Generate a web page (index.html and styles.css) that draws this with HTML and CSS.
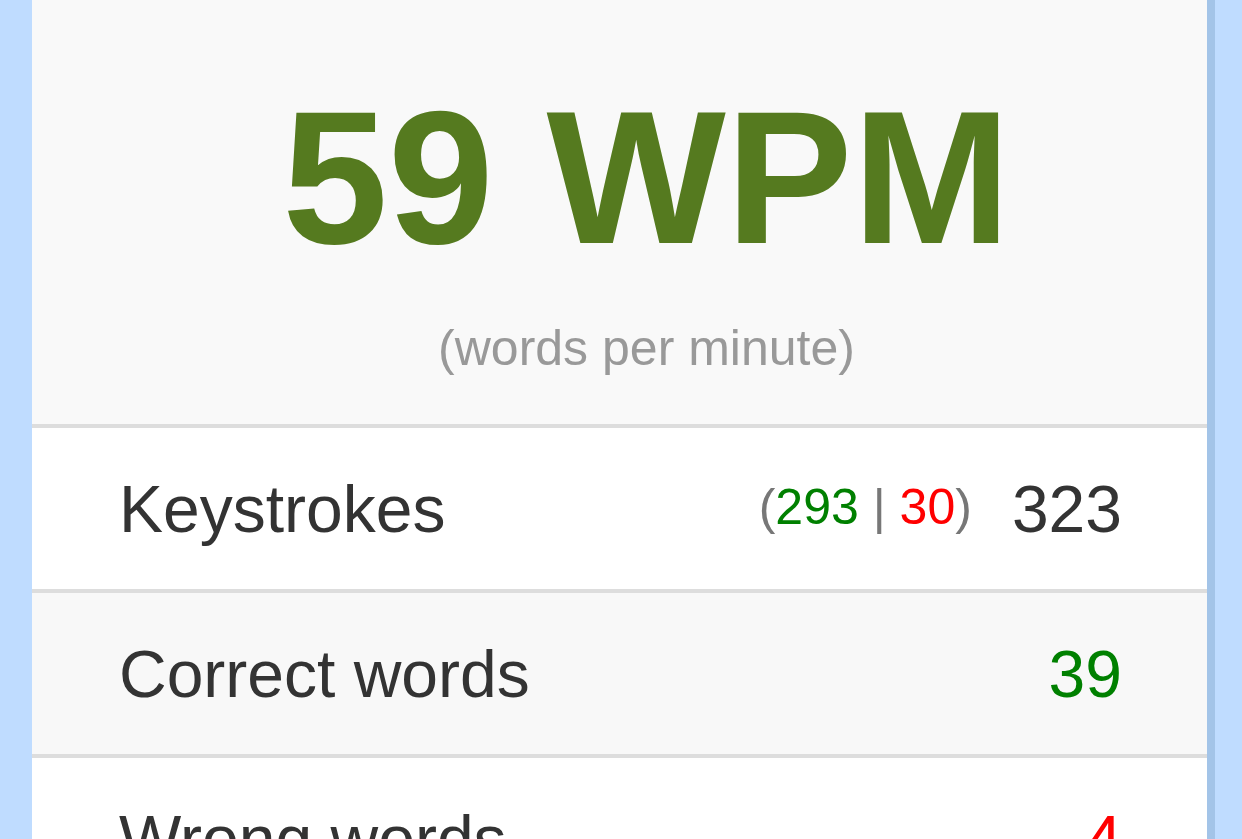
FILE: index.html
```html
<!DOCTYPE html>
<html lang="en">
<head>
<meta charset="utf-8">
<title>Result</title>
<link rel="stylesheet" href="styles.css">
</head>
<body>
<div class="page">
  <div class="card">
    <div class="hero">
      <div class="wpm">59 WPM</div>
      <div class="sub">(words per minute)</div>
    </div>
    <div class="row row-white">
      <span class="label">Keystrokes</span>
      <span class="value">
        <span class="detail"><span class="muted">(</span><span class="good">293</span> <span class="muted">|</span> <span class="bad">30</span><span class="muted">)</span></span>
        <span class="num">323</span>
      </span>
    </div>
    <div class="row row-grey">
      <span class="label">Correct words</span>
      <span class="num good">39</span>
    </div>
    <div class="row row-white">
      <span class="label">Wrong words</span>
      <span class="num bad">4</span>
    </div>
  </div>
</div>
</body>
</html>
```
FILE: styles.css
```css
html, body {
  margin: 0;
  padding: 0;
  height: 100%;
  overflow: hidden;
  background: #bfdcff;
  font-family: "Liberation Sans", Arial, sans-serif;
}

.page {
  padding-left: 32px;
  height: 100%;
}

.card {
  width: 1175px;
  height: 100%;
  border-right: 8px solid #a3c4e8;
  background: #ffffff;
}

.hero {
  background: #f9f9f9;
  padding: 82px 0 51px 54px;
  text-align: center;
  border-bottom: 4px solid #dddddd;
}

.wpm {
  font-size: 190px;
  line-height: 190px;
  font-weight: bold;
  color: #557a1f;
}

.sub {
  margin-top: 51px;
  font-size: 50px;
  line-height: 50px;
  color: #999999;
}

.row {
  display: flex;
  align-items: center;
  justify-content: space-between;
  padding: 0 85px 0 87px;
  border-bottom: 4px solid #dddddd;
  box-sizing: border-box;
  height: 165px;
  font-size: 66px;
  line-height: 66px;
  color: #333333;
}

.row-white { background: #ffffff; }
.row-grey { background: #f8f8f8; }

.value {
  display: flex;
  align-items: center;
  gap: 40px;
}

.detail {
  font-size: 50px;
  line-height: 50px;
  position: relative;
  top: -2px;
}

.muted { color: #777777; }
.good { color: #008000; }
.bad { color: #ff0000; }
```
